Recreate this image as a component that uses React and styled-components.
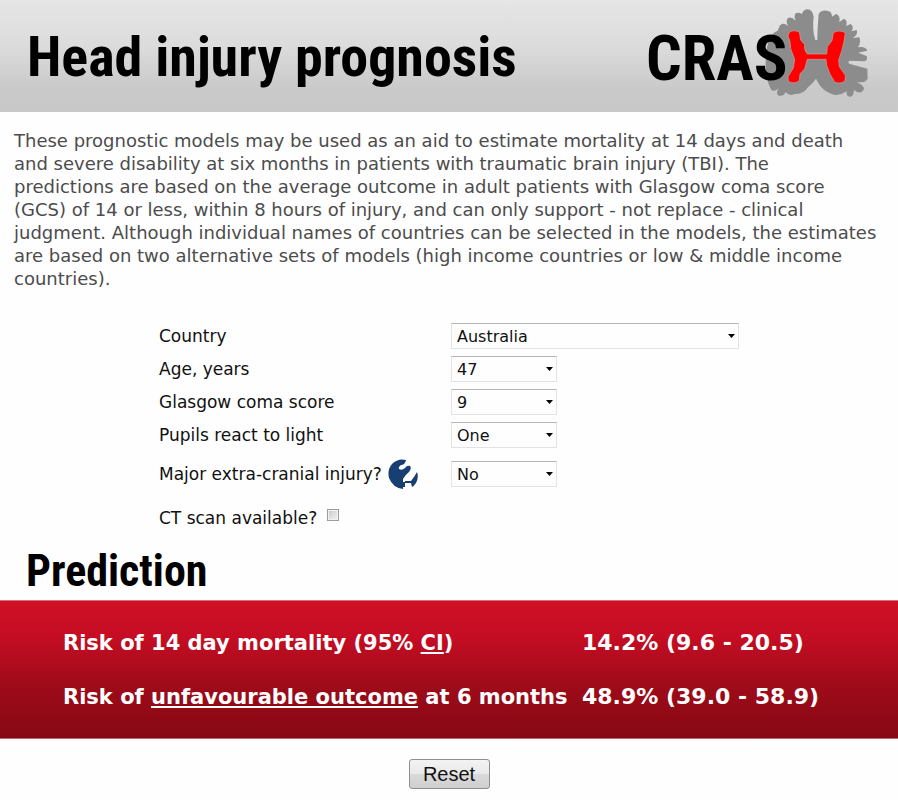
import { useState } from "react";
import styled, { createGlobalStyle } from "styled-components";

const GlobalStyle = createGlobalStyle`
  * {
    box-sizing: border-box;
  }
  body {
    margin: 0;
    background: #fefefe;
    color: #111;
    font-family: "DejaVu Sans", Verdana, sans-serif;
  }
`;

const headingFont = `"Roboto Condensed", "Arial Narrow", "Liberation Sans", Arial, sans-serif`;

const Header = styled.header`
  display: flex;
  justify-content: space-between;
  align-items: flex-start;
  height: 112px;
  padding: 8px 28px 0 27px;
  background: linear-gradient(#e6e6e6, #dcdcdc 40%, #c9c9c9 80%, #c8c8c8);
`;

const Title = styled.h1`
  margin: 0;
  color: #000;
  font-family: ${headingFont};
  font-size: 56px;
  line-height: 98px;
  white-space: nowrap;
`;

const Logo = styled.svg`
  flex: none;
  width: 224px;
  height: 92px;
`;

const LogoText = styled.text`
  font-family: ${headingFont};
  font-size: 188px;
  font-weight: bold;
`;

const Intro = styled.p`
  margin: 0;
  padding: 17px 14px 0;
  color: #4c4c4c;
  font-size: 18px;
  line-height: 23px;

  @media (max-width: 890px) {
    br {
      display: none;
    }
  }
`;

const Form = styled.form`
  display: flex;
  flex-direction: column;
  gap: 7px;
  max-width: 580px;
  margin: 33px auto 0;
`;

const Field = styled.div`
  display: grid;
  grid-template-columns: 292px 1fr;
  align-items: center;
  min-height: ${(props) => (props.$tall ? "38px" : "26px")};
  font-size: 17px;
`;

const LabelBox = styled.div`
  display: flex;
  align-items: center;
  gap: 6px;
`;

const SelectBox = styled.div`
  display: grid;
  align-items: center;
  width: ${(props) => (props.$wide ? "100%" : "106px")};

  & > * {
    grid-area: 1 / 1;
  }
`;

const Select = styled.select`
  appearance: none;
  width: 100%;
  height: 26px;
  padding: 0 5px;
  border: 1px solid #e3e3e3;
  border-top-color: #b5b5b5;
  border-radius: 0;
  background: #fefefe;
  color: #111;
  font-family: inherit;
  font-size: 16px;
`;

const Arrow = styled.svg`
  justify-self: end;
  width: 7px;
  height: 4px;
  margin-right: 4px;
  pointer-events: none;
`;

const HelpButton = styled.button`
  width: 30px;
  height: 30px;
  padding: 0;
  border: 0;
  background: none;
`;

const CheckField = styled.div`
  display: flex;
  align-items: center;
  gap: 10px;
  height: 36px;
  font-size: 17px;
`;

const Checkbox = styled.input`
  appearance: none;
  width: 12px;
  height: 12px;
  margin: 0 0 7px;
  border: 1px solid #9c9c9c;
  background: linear-gradient(135deg, #c9c9c9, #f4f4f4);
  box-shadow: inset 0 0 0 1px #f2f2f2;

  &:checked {
    background: #1d4a7c;
  }
`;

const SectionTitle = styled.h2`
  margin: 0;
  padding: 6px 26px 0;
  color: #000;
  font-family: ${headingFont};
  font-size: 44px;
  line-height: 58px;
`;

const Results = styled.section`
  padding: 15px 0 14px;
  border-top: 1px solid #dc6a78;
  border-bottom: 1px solid #c0616b;
  background: linear-gradient(#cf1026, #c60d23 25%, #a00b1a 60%, #860813);
`;

const ResultsTable = styled.table`
  width: 772px;
  margin: 0 auto;
  border-collapse: collapse;
  color: #fff;
  font-size: 21px;
  line-height: 24px;
  text-align: left;

  th,
  td {
    height: 54px;
    padding: 0;
    font-weight: bold;
    white-space: nowrap;
  }
  th {
    width: 519px;
  }
  td {
    font-size: 22px;
  }
`;

const Link = styled.a`
  color: inherit;
  text-decoration: underline;
`;

const Footer = styled.footer`
  display: flex;
  justify-content: center;
  padding: 20px 0 12px;
`;

const ResetButton = styled.button`
  width: 81px;
  height: 30px;
  padding: 0;
  border: 1px solid #8f8f8f;
  border-radius: 3px;
  background: linear-gradient(#f3f3f3, #e9e9e9 50%, #dadada 51%, #cfcfcf);
  color: #111;
  font-family: "Liberation Sans", Arial, sans-serif;
  font-size: 20px;
`;

const fields = [
  { id: "country", label: "Country", options: ["Australia", "Austria", "United Kingdom"], wide: true },
  { id: "age", label: "Age, years", options: ["47", "48", "49"] },
  { id: "gcs", label: "Glasgow coma score", options: ["9", "10", "11"] },
  { id: "pupils", label: "Pupils react to light", options: ["One", "Both", "None"] },
  { id: "injury", label: "Major extra-cranial injury?", options: ["No", "Yes"], help: true },
];

const initial = { country: "Australia", age: "47", gcs: "9", pupils: "One", injury: "No" };

const CrashLogo = () => (
  <Logo viewBox="48 24 672 276" role="img" aria-label="CRASH">
    <path
      fill="#8c8c8c"
      d="M556 120 Q546 90 551 50 Q548 29 532 28 Q518 30 516 42 Q504 34 495 42 Q491 52 497 62 Q484 48 474 54 Q466 62 474 78 Q460 66 450 76 L443 92 Q424 98 416 124 Q406 150 407 200 Q408 240 424 270 Q436 276 446 264 Q436 280 446 287 Q460 290 467 276 Q478 290 494 282 Q520 284 534 262 Q548 250 558 236 Q572 268 600 280 Q622 292 650 274 Q648 290 660 290 Q670 292 672 270 Q692 286 702 268 Q702 256 680 246 Q706 250 713 236 L712 206 L660 192 Q650 186 660 182 L704 184 Q714 180 710 168 L684 158 L712 152 Q706 138 684 142 Q694 128 688 112 L668 114 Q686 104 680 90 L664 94 Q674 82 662 72 L648 78 Q654 62 642 56 L628 66 Q632 46 618 42 L606 50 Q606 32 590 32 Q574 30 566 42 Q562 90 562 120 Z"
    />
    <LogoText x="48" y="241">CRAS</LogoText>
    <path
      fill="#f00"
      stroke="#c9a0a0"
      strokeWidth="2"
      d="M478 96 Q492 88 508 96 L512 120 L524 134 Q522 152 532 162 L590 162 L592 140 L606 122 L610 98 Q628 88 646 98 L642 124 L636 150 L626 180 L628 200 L646 226 L645 242 Q632 254 614 246 L600 222 L590 196 L588 178 L532 178 L524 206 L510 222 L508 242 Q492 254 475 244 L474 230 L490 204 L494 178 L482 146 L480 124 L474 108 Z"
    />
  </Logo>
);

const HelpIcon = () => (
  <svg width="30" height="30" viewBox="0 0 30 30" aria-hidden="true">
    <path
      fill="#173f72"
      d="M18 1 Q10 -1 4 5 Q-1 11 1 19 Q5 29 15 30 L15 28 L17 28 L17 23 L15 23 L15 20 Q17 16 21 13 Q24 9 22 7 Q19 6 17 9 Q14 12 11 10 Q10 8 13 6 Q17 6 18 1 Z"
    />
    <path fill="#173f72" d="M29 13 Q31 18 28 24 Q26 27 24 28 L23 24 L17 24 L17 22 L23 22 Q27 17 29 13 Z" />
  </svg>
);

const App = () => {
  const [values, setValues] = useState(initial);
  const [ctScan, setCtScan] = useState(false);

  const change = (id, value) => {
    setValues({ ...values, [id]: value });
  };

  const reset = () => {
    setValues(initial);
    setCtScan(false);
  };

  return (
    <>
      <GlobalStyle />
      <Header>
        <Title>Head injury prognosis</Title>
        <CrashLogo />
      </Header>
      <main>
        <Intro>
          These prognostic models may be used as an aid to estimate mortality at 14 days and death
          <br /> and severe disability at six months in patients with traumatic brain injury (TBI). The
          <br /> predictions are based on the average outcome in adult patients with Glasgow coma score
          <br /> (GCS) of 14 or less, within 8 hours of injury, and can only support - not replace - clinical
          <br /> judgment. Although individual names of countries can be selected in the models, the estimates
          <br /> are based on two alternative sets of models (high income countries or low &amp; middle income
          <br /> countries).
        </Intro>
        <Form>
          {fields.map((field) => (
            <Field key={field.id} $tall={field.help}>
              <LabelBox>
                <label htmlFor={field.id}>{field.label}</label>
                {field.help && (
                  <HelpButton type="button" aria-label="Help">
                    <HelpIcon />
                  </HelpButton>
                )}
              </LabelBox>
              <SelectBox $wide={field.wide}>
                <Select
                  id={field.id}
                  value={values[field.id]}
                  onChange={(e) => change(field.id, e.target.value)}
                >
                  {field.options.map((option) => (
                    <option key={option}>{option}</option>
                  ))}
                </Select>
                <Arrow viewBox="0 0 7 4">
                  <path d="M0 0h7L3.5 4z" />
                </Arrow>
              </SelectBox>
            </Field>
          ))}
          <CheckField>
            <label htmlFor="ct">CT scan available?</label>
            <Checkbox
              id="ct"
              type="checkbox"
              checked={ctScan}
              onChange={(e) => setCtScan(e.target.checked)}
            />
          </CheckField>
        </Form>
        <SectionTitle>Prediction</SectionTitle>
        <Results>
          <ResultsTable>
            <tbody>
              <tr>
                <th scope="row">
                  Risk of 14 day mortality (95% <Link href="#ci">CI</Link>)
                </th>
                <td>14.2% (9.6 - 20.5)</td>
              </tr>
              <tr>
                <th scope="row">
                  Risk of <Link href="#outcome">unfavourable outcome</Link> at 6 months
                </th>
                <td>48.9% (39.0 - 58.9)</td>
              </tr>
            </tbody>
          </ResultsTable>
        </Results>
      </main>
      <Footer>
        <ResetButton type="button" onClick={reset}>
          Reset
        </ResetButton>
      </Footer>
    </>
  );
};

export default App;
